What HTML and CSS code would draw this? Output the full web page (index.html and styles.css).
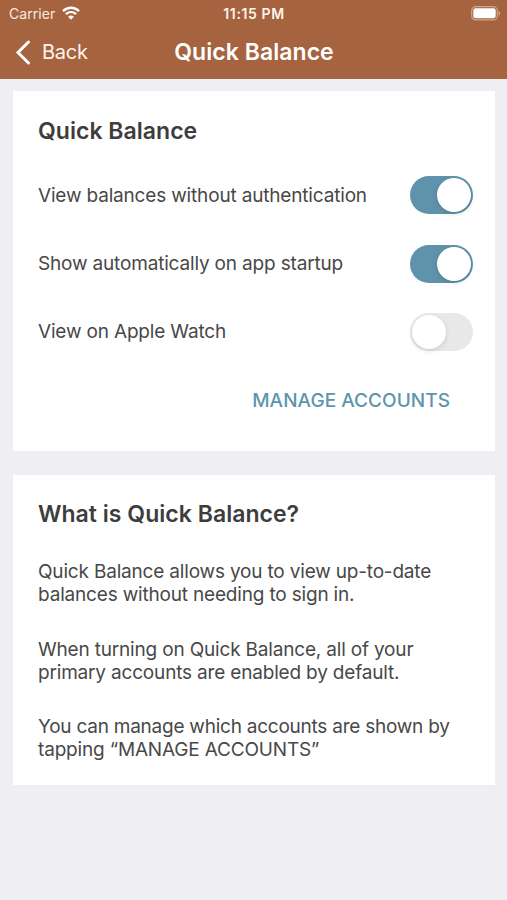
FILE: index.html
```html
<!DOCTYPE html>
<html lang="en">
<head>
<meta charset="utf-8">
<title>Quick Balance</title>
<link rel="stylesheet" href="styles.css">
</head>
<body>
<header class="header">
  <div class="status">
    <div class="carrier"><span>Carrier</span>
      <svg class="wifi" width="18" height="14" viewBox="0 0 18 14" fill="none" stroke="#fff" stroke-width="2.4"><path d="M1 5.1C5.6.7 12.4.7 17 5.1M3.9 8.2c3-2.8 7.200-2.800 10.200 0"/><path d="M9 13.700 6.100 10.700c1.600-1.500 4.200-1.500 5.800 0z" fill="#fff" stroke="none"/></svg>
    </div>
    <time class="time">11:15 PM</time>
    <svg class="battery" width="30" height="15" viewBox="0 0 30 15"><rect x=".7" y=".7" width="25.600" height="13.200" rx="4" fill="none" stroke="#d0a78f" stroke-width="1.200"/><rect x="2.300" y="2.300" width="22.400" height="10" rx="2.300" fill="#fff"/><path d="M27.600 5v4.600c2-.8 2-3.800 0-4.600z" fill="#d0a78f"/></svg>
  </div>
  <nav class="nav">
    <a class="back"><svg width="16" height="25" viewBox="0 0 16 25" fill="none" stroke="#fff" stroke-width="3" stroke-linecap="round"><path d="M13.500 2 3 12.500 13.500 23"/></svg><span>Back</span></a>
    <h1 class="title">Quick Balance</h1>
  </nav>
</header>
<main class="content">
  <section class="card settings">
    <h2 class="heading">Quick Balance</h2>
    <div class="row"><span class="label">View balances without authentication</span><span class="switch on"></span></div>
    <div class="row"><span class="label">Show automatically on app startup</span><span class="switch on"></span></div>
    <div class="row"><span class="label">View on Apple Watch</span><span class="switch"></span></div>
    <a class="manage">MANAGE ACCOUNTS</a>
  </section>
  <section class="card about">
    <h2 class="heading">What is Quick Balance?</h2>
    <p>Quick Balance allows you to view up-to-date<br>balances without needing to sign in.</p>
    <p>When turning on Quick Balance, all of your<br>primary accounts are enabled by default.</p>
    <p class="tip">You can manage which accounts are shown by<br><span class="tap">tapping “MANAGE ACCOUNTS”</span></p>
  </section>
</main>
</body>
</html>
```
FILE: styles.css
```css
* { box-sizing: border-box; }
body { margin: 0; min-height: 900px; background: #efeef3; color: #484848; font-family: Inter, "Liberation Sans", sans-serif; font-size: 19px; }
.header { height: 79px; background: #a5633f; color: #fff; }
.status { height: 27px; display: grid; grid-template-columns: 1fr auto 1fr; align-items: center; padding: 0 6px 0 9px; }
.carrier { display: flex; align-items: center; gap: 7px; font-size: 14px; letter-spacing: .05px; color: #f8e9e0; }
.wifi { margin-top: -1px; }
.time { margin-right: 2px; font-size: 14px; font-weight: 600; letter-spacing: .6px; line-height: 27px; color: #fff3eb; }
.battery { justify-self: end; }
.nav { height: 50px; display: grid; grid-template-columns: 1fr auto 1fr; align-items: center; padding: 0 14px 0 15px; }
.back { display: flex; align-items: center; gap: 11px; font-size: 20px; letter-spacing: -.25px; color: #fff3eb; }
.title { margin: -1px 0 0; font-size: 23px; line-height: 28px; font-weight: 600; letter-spacing: .05px; }
.content { padding: 12px 12px 0 13px; }
.card { background: #fff; padding: 0 22px 0 25px; }
.settings { height: 360px; margin-bottom: 24px; padding-top: 24px; }
.about { height: 310px; padding-top: 23px; }
.heading { margin: 0; font-size: 23px; line-height: 32px; font-weight: 600; letter-spacing: .03px; color: #3d3d3d; }
.row { height: 68.400px; display: flex; align-items: center; justify-content: space-between; }
.label { letter-spacing: -.17px; }
.settings .heading { margin-bottom: 14px; }
.switch { width: 63px; height: 38px; border-radius: 19px; background: #e8e8e9; padding: 2px; display: flex; }
.switch::before { content: ""; width: 34px; height: 34px; border-radius: 50%; background: #fff; box-shadow: 0 2px 5px rgba(0,0,0,.12); }
.switch.on { background: #5e93ab; justify-content: flex-end; }
.manage { display: block; text-align: right; margin: 19px 23px 0 0; line-height: 32px; font-weight: 500; letter-spacing: .05px; color: #5e94ad; }
.about .heading { margin-bottom: 30px; }
p { margin: 0 0 31.600px; line-height: 23px; letter-spacing: -.18px; white-space: nowrap; }
.tip { letter-spacing: -.24px; }
.tap { letter-spacing: -.17px; }
```
